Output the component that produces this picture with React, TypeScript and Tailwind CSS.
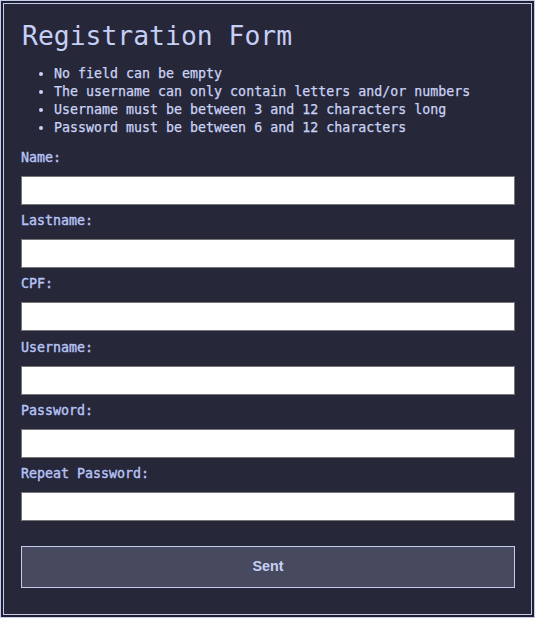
const rules = [
  "No field can be empty",
  "The username can only contain letters and/or numbers",
  "Username must be between 3 and 12 characters long",
  "Password must be between 6 and 12 characters",
];

const fields = [
  { id: "name", label: "Name:", type: "text" },
  { id: "lastname", label: "Lastname:", type: "text" },
  { id: "cpf", label: "CPF:", type: "text" },
  { id: "username", label: "Username:", type: "text" },
  { id: "password", label: "Password:", type: "password" },
  { id: "repeat", label: "Repeat Password:", type: "password" },
];

export default function App() {
  return (
    <div className="w-[535px] h-[618px] border border-[#c5cbef] bg-[#1e2030] p-[2px]">
      <div
        className="h-full border border-[#c5cbef] bg-[#262739] pt-[16px] pl-[17px] pr-[16px] text-[#cad3f5]"
        style={{ fontFamily: '"DejaVu Sans Mono", "Liberation Mono", monospace' }}
      >
        <h1 className="text-[26.4px] leading-[32px] pl-[1px] text-[#c6cff5]">Registration Form</h1>

        {/* Rules */}
        <ul className="list-disc pl-[33px] mt-[13px] text-[13.3px] leading-[18px] text-[#cad3f5] [-webkit-text-stroke:0.25px]">
          {rules.map((r) => (
            <li key={r}>{r}</li>
          ))}
        </ul>

        <form className="mt-[13px] flex flex-col gap-[8.2px]" onSubmit={(e) => e.preventDefault()}>
          {fields.map((f) => (
            <div key={f.id} className="flex flex-col">
              <label
                htmlFor={f.id}
                className="text-[13.3px] leading-[16px] text-[#b7c3f5] [-webkit-text-stroke:0.4px]"
              >
                {f.label}
              </label>
              <input
                id={f.id}
                type={f.type}
                className="mt-[10px] h-[29px] w-full bg-white border border-[#767676] px-1 text-black"
              />
            </div>
          ))}
          <button
            type="submit"
            className="mt-[16.8px] h-[42px] w-full bg-[#474a5f] border border-[#c5cbef] text-[14.3px] font-bold text-[#c6d0f5]"
            style={{ fontFamily: '"Liberation Sans", Arial, sans-serif' }}
          >
            Sent
          </button>
        </form>
      </div>
    </div>
  );
}
